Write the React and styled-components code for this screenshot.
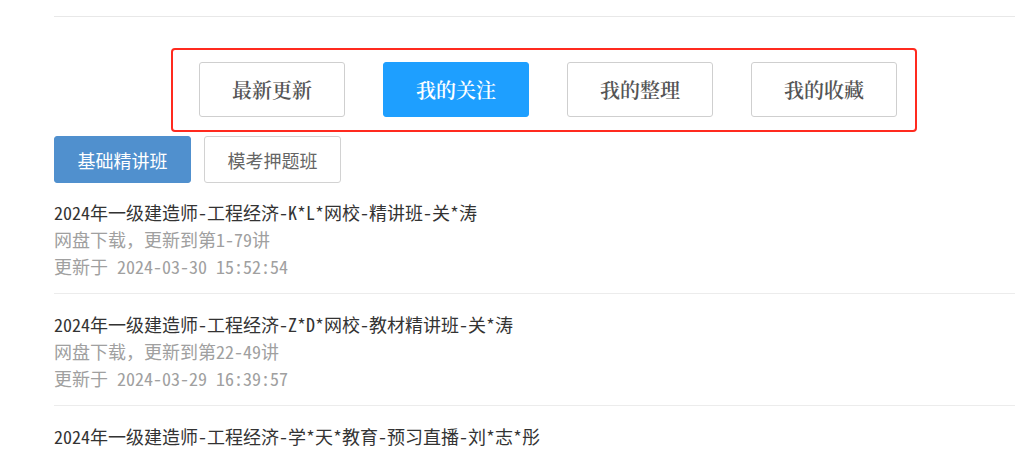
import styled, { createGlobalStyle } from "styled-components";

const GlobalStyle = createGlobalStyle`
  html, body {
    margin: 0;
    padding: 0;
    background: #ffffff;
    overflow: hidden;
  }
  body {
    font-family: "Noto Sans", "Noto Sans CJK SC", sans-serif;
  }
`;

const Page = styled.div`
  padding: 16px 0 0 54px;
  min-height: 453px;
  box-sizing: border-box;
`;

const TopRule = styled.div`
  height: 1px;
  background: #e8e8e8;
  margin-bottom: 31px;
`;

const FilterBox = styled.div`
  display: flex;
  gap: 38px;
  width: fit-content;
  margin-left: 117px;
  margin-bottom: 4px;
  padding: 12px 18px 13px 26px;
  border: 2px solid #ff2a1f;
  border-radius: 4px;
`;

const FilterButton = styled.button`
  width: 146px;
  height: 55px;
  box-sizing: border-box;
  border: 1px solid ${(p) => (p.$active ? "#1e9fff" : "#cfcfcf")};
  border-radius: 3px;
  background: ${(p) => (p.$active ? "#1e9fff" : "#ffffff")};
  color: ${(p) => (p.$active ? "#ffffff" : "#555555")};
  font-family: "Noto Serif CJK SC", "Noto Sans CJK SC", serif;
  font-size: 20px;
  font-weight: 600;
  cursor: pointer;
  padding: 0;
`;

const Tabs = styled.div`
  display: flex;
  gap: 13px;
`;

const Tab = styled.button`
  width: 137px;
  height: 47px;
  box-sizing: border-box;
  border: 1px solid ${(p) => (p.$active ? "#5090ce" : "#d2d2d2")};
  border-radius: 3px;
  background: ${(p) => (p.$active ? "#5090ce" : "#ffffff")};
  color: ${(p) => (p.$active ? "#ffffff" : "#666666")};
  font-family: "Noto Sans CJK SC", sans-serif;
  font-size: 18px;
  cursor: pointer;
  padding: 0;
`;

const List = styled.div`
  display: flex;
  flex-direction: column;
`;

const Item = styled.div`
  padding: 17px 0 13px;
  border-top: 1px solid #ececec;
  font-family: "Noto Sans Mono CJK SC", "Liberation Mono", "Noto Sans CJK SC", monospace;
  font-size: 18px;
  line-height: 27px;

  &:first-child {
    border-top: none;
    padding-top: 16px;
  }
`;

const Title = styled.div`
  color: #333333;
  white-space: nowrap;
`;

const Meta = styled.div`
  color: #a0a0a0;
  white-space: nowrap;
`;

const filters = ["最新更新", "我的关注", "我的整理", "我的收藏"];
const tabs = ["基础精讲班", "模考押题班"];

const items = [
  {
    title: "2024年一级建造师-工程经济-K*L*网校-精讲班-关*涛",
    progress: "网盘下载，更新到第1-79讲",
    time: "更新于 2024-03-30 15:52:54",
  },
  {
    title: "2024年一级建造师-工程经济-Z*D*网校-教材精讲班-关*涛",
    progress: "网盘下载，更新到第22-49讲",
    time: "更新于 2024-03-29 16:39:57",
  },
  {
    title: "2024年一级建造师-工程经济-学*天*教育-预习直播-刘*志*彤",
    progress: "网盘下载，更新到第1-12讲",
    time: "更新于 2024-03-28 10:12:30",
  },
];

export default function App() {
  return (
    <>
      <GlobalStyle />
      <Page>
        <TopRule />
        <FilterBox>
          {filters.map((f) => (
            <FilterButton key={f} $active={f === "我的关注"}>
              {f}
            </FilterButton>
          ))}
        </FilterBox>
        <Tabs>
          {tabs.map((t, i) => (
            <Tab key={t} $active={i === 0}>
              {t}
            </Tab>
          ))}
        </Tabs>
        <List>
          {items.map((item) => (
            <Item key={item.title}>
              <Title>{item.title}</Title>
              <Meta>{item.progress}</Meta>
              <Meta>{item.time}</Meta>
            </Item>
          ))}
        </List>
      </Page>
    </>
  );
}
